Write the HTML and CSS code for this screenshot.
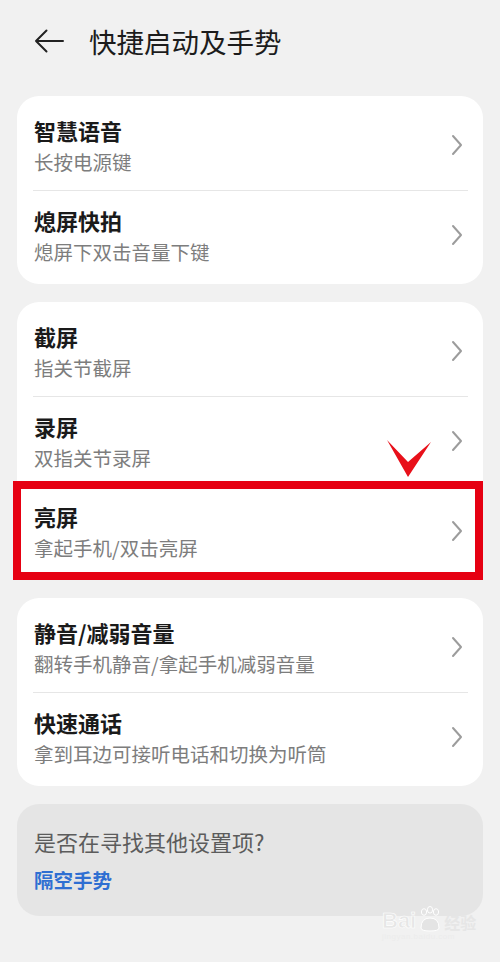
FILE: index.html
```html
<!DOCTYPE html>
<html lang="zh-CN">
<head>
<meta charset="utf-8">
<title>快捷启动及手势</title>
<link rel="stylesheet" href="styles.css">
</head>
<body>
<div class="screen">
  <header class="header">
    <svg class="back" width="30" height="24" viewBox="0 0 30 24" aria-hidden="true">
      <path d="M2 12 H29 M12.5 1.5 L2 12 L12.5 22.5" fill="none" stroke="#222" stroke-width="2" stroke-linecap="round" stroke-linejoin="round"/>
    </svg>
    <h1 class="title">快捷启动及手势</h1>
  </header>

  <main class="list">
    <section class="card">
      <div class="row">
        <div class="text"><div class="t">智慧语音</div><div class="s">长按电源键</div></div>
        <svg class="chev" width="12" height="22" viewBox="0 0 12 22"><polyline points="2,2 10,11 2,20" fill="none" stroke="#9c9c9c" stroke-width="2" stroke-linecap="round" stroke-linejoin="round"/></svg>
      </div>
      <div class="row">
        <div class="text"><div class="t">熄屏快拍</div><div class="s">熄屏下双击音量下键</div></div>
        <svg class="chev" width="12" height="22" viewBox="0 0 12 22"><polyline points="2,2 10,11 2,20" fill="none" stroke="#9c9c9c" stroke-width="2" stroke-linecap="round" stroke-linejoin="round"/></svg>
      </div>
    </section>

    <section class="card">
      <div class="row">
        <div class="text"><div class="t">截屏</div><div class="s">指关节截屏</div></div>
        <svg class="chev" width="12" height="22" viewBox="0 0 12 22"><polyline points="2,2 10,11 2,20" fill="none" stroke="#9c9c9c" stroke-width="2" stroke-linecap="round" stroke-linejoin="round"/></svg>
      </div>
      <div class="row">
        <div class="text"><div class="t">录屏</div><div class="s">双指关节录屏</div></div>
        <svg class="chev" width="12" height="22" viewBox="0 0 12 22"><polyline points="2,2 10,11 2,20" fill="none" stroke="#9c9c9c" stroke-width="2" stroke-linecap="round" stroke-linejoin="round"/></svg>
      </div>
      <div class="row">
        <div class="text"><div class="t">亮屏</div><div class="s">拿起手机/双击亮屏</div></div>
        <svg class="chev" width="12" height="22" viewBox="0 0 12 22"><polyline points="2,2 10,11 2,20" fill="none" stroke="#9c9c9c" stroke-width="2" stroke-linecap="round" stroke-linejoin="round"/></svg>
      </div>
    </section>

    <section class="card">
      <div class="row">
        <div class="text"><div class="t">静音/减弱音量</div><div class="s">翻转手机静音/拿起手机减弱音量</div></div>
        <svg class="chev" width="12" height="22" viewBox="0 0 12 22"><polyline points="2,2 10,11 2,20" fill="none" stroke="#9c9c9c" stroke-width="2" stroke-linecap="round" stroke-linejoin="round"/></svg>
      </div>
      <div class="row">
        <div class="text"><div class="t">快速通话</div><div class="s">拿到耳边可接听电话和切换为听筒</div></div>
        <svg class="chev" width="12" height="22" viewBox="0 0 12 22"><polyline points="2,2 10,11 2,20" fill="none" stroke="#9c9c9c" stroke-width="2" stroke-linecap="round" stroke-linejoin="round"/></svg>
      </div>
    </section>

    <section class="card card-grey">
      <div class="q">是否在寻找其他设置项?</div>
      <div class="link">隔空手势</div>
    </section>
  </main>

  <div class="highlight"></div>
  <svg class="mark" width="46" height="40" viewBox="0 0 46 40" aria-hidden="true">
    <polygon points="1,2 22,24 45,4 22,39" fill="#e8101a"/>
  </svg>

  <div class="watermark">
    <span class="wm-bai">Bai</span><svg class="wm-paw" width="26" height="26" viewBox="0 0 26 26"><g fill="#e4e4e4" stroke="#fff" stroke-width="1"><ellipse cx="7" cy="6" rx="2.6" ry="3.3"/><ellipse cx="13" cy="3.8" rx="2.6" ry="3.3"/><ellipse cx="19" cy="6" rx="2.6" ry="3.3"/><path d="M4 22 Q4 12 13 12 Q22 12 22 22 Q22 25 13 25 Q4 25 4 22Z"/></g></svg><span class="wm-jy">经验</span>
    <div class="wm-url">jingyan.baidu.com</div>
  </div>
</div>
</body>
</html>
```

FILE: styles.css
```css
* { box-sizing: border-box; }

html, body {
  margin: 0;
  padding: 0;
  background: #f1f1f1;
}

body {
  font-family: "Noto Sans CJK SC", "Noto Sans", sans-serif;
  color: #1a1a1a;
}

.screen {
  position: relative;
  width: 500px;
  height: 962px;
  overflow: hidden;
}

.header {
  height: 82px;
  display: flex;
  align-items: center;
  padding-left: 34px;
  gap: 25px;
}

.back { display: block; }

.title {
  margin: 0;
  font-size: 27.5px;
  font-weight: 400;
  line-height: 34px;
  color: #1c1c1c;
}

.list {
  padding: 14px 17px 0;
  display: flex;
  flex-direction: column;
  gap: 18px;
}

.card {
  background: #ffffff;
  border-radius: 22px;
  padding: 4px 0;
}

.row {
  position: relative;
  height: 90px;
  display: flex;
  align-items: center;
  padding: 0 20px 0 17px;
}

.row + .row::before {
  content: "";
  position: absolute;
  top: 0;
  left: 16px;
  right: 15px;
  border-top: 1px solid #e6e6e6;
}

.text {
  flex: 1;
}

.t {
  font-size: 22px;
  line-height: 28px;
  font-weight: 700;
  color: #1a1a1a;
  margin-bottom: 6px;
}

.s {
  font-size: 19.5px;
  line-height: 24px;
  color: #7d7d7d;
}

.chev { display: block; flex: none; }

.card-grey {
  background: #e5e5e5;
  padding: 22px 17px 23px;
}

.q {
  font-size: 22px;
  line-height: 30px;
  color: #5c5c5c;
  margin-bottom: 11px;
}

.link {
  font-size: 19.5px;
  line-height: 26px;
  font-weight: 700;
  color: #2f6fd2;
}

.highlight {
  position: absolute;
  left: 13px;
  top: 481px;
  width: 470px;
  height: 99px;
  border: 8px solid #e60012;
}

.mark {
  position: absolute;
  left: 386px;
  top: 438px;
}

.watermark {
  position: absolute;
  left: 382px;
  top: 906px;
  width: 96px;
  display: flex;
  flex-wrap: wrap;
  align-items: flex-end;
}

.wm-bai {
  font-family: "Liberation Sans", sans-serif;
  font-weight: 700;
  font-size: 22px;
  line-height: 22px;
  color: #e6e6e6;
  -webkit-text-stroke: 0.6px #ffffff;
}

.wm-paw { display: block; margin: 0 1px; }

.wm-jy {
  font-size: 16px;
  line-height: 20px;
  font-weight: 700;
  color: #e6e6e6;
}

.wm-url {
  width: 100%;
  font-family: "Liberation Sans", sans-serif;
  font-size: 8px;
  line-height: 10px;
  color: #ececec;
  letter-spacing: 0.5px;
}
```
